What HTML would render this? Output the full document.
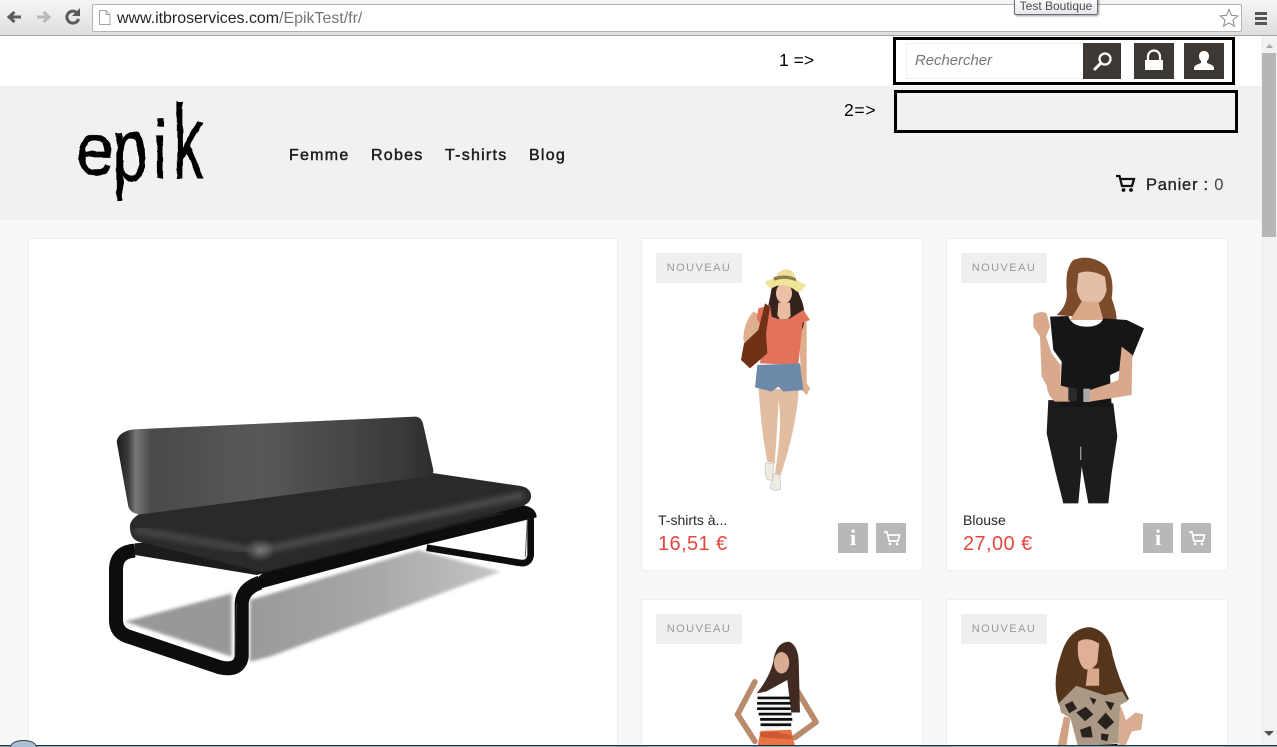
<!DOCTYPE html>
<html lang="fr">
<head>
<meta charset="utf-8">
<title>Test Boutique</title>
<style>
html,body{margin:0;padding:0;width:1277px;height:747px;overflow:hidden;background:#f8f8f8;font-family:"Liberation Sans",sans-serif}
#wrap{position:relative;width:1277px;height:747px;overflow:hidden;background:#f8f8f8}
.a{position:absolute}
.t{position:absolute;white-space:nowrap}
svg{position:absolute}
.card{position:absolute;background:#fff;box-shadow:0 0 2px rgba(0,0,0,.12);}
.badge{position:absolute;width:86px;height:30px;background:#efefef;color:#9a9a9a;font-size:11px;letter-spacing:1.45px;line-height:30px;text-align:center}
.btn{position:absolute;width:30px;height:30px;background:#b8b8b8;top:523px}
.name{position:absolute;top:512px;font-size:14px;color:#26262c;line-height:16px;white-space:nowrap}
.price{position:absolute;top:532px;font-size:20px;color:#e4473d;line-height:24px;letter-spacing:.4px;white-space:nowrap}
.nav{position:absolute;top:147px;font-size:16px;line-height:18px;color:#1d1d1d;letter-spacing:1.25px;-webkit-text-stroke:.45px #1d1d1d;white-space:nowrap}
.dk{position:absolute;background:#3d3833;top:43px;height:36px}
</style>
</head>
<body>
<div id="wrap">

<!-- browser toolbar -->
<div class="a" style="left:0;top:0;width:1277px;height:35px;background:linear-gradient(#f6f6f6,#dedede);border-bottom:1px solid #a3a3a3"></div>
<svg style="left:0;top:0" width="90" height="36">
  <path d="M21 17H10M14.500 12L9 17l5.500 5" fill="none" stroke="#5c5c5c" stroke-width="3"/>
  <path d="M37 17H48M43.500 12L49 17l-5.500 5" fill="none" stroke="#b9b9b9" stroke-width="3"/>
  <path d="M78 14a6 6 0 1 0 .6 5" fill="none" stroke="#5c5c5c" stroke-width="3"/>
  <path d="M80 8v8h-8z" fill="#5c5c5c"/>
</svg>
<div class="a" style="left:92px;top:4px;width:1148px;height:26px;background:#fff;border:1px solid #b4b4b4;border-radius:2px"></div>
<svg style="left:98px;top:9px" width="14" height="17">
  <path d="M1.500 1.500h6.500l4 4v10h-10.500zM8 1.500v4h4" fill="#fff" stroke="#a5a5a5"/>
</svg>
<div class="t" style="left:117px;top:9px;font-size:15.95px;line-height:19px;color:#242424">www.itbroservices.com<span style="color:#767676">/EpikTest/fr/</span></div>
<div class="t" style="left:1014px;top:-3px;width:82px;height:16px;background:linear-gradient(#fff,#e5e5ee);border:1px solid #6e6e6e;border-radius:2px;box-shadow:1px 1px 2px rgba(0,0,0,.4);font-size:12px;line-height:16px;text-align:center;color:#4c4c4c">Test Boutique</div>
<svg style="left:1219px;top:8px" width="20" height="20">
  <path d="M10 1.500l2.500 5.800 6.200.6-4.700 4.100 1.400 6.100L10 15l-5.400 3.100 1.400-6.100L1.300 7.900l6.200-.6z" fill="#fff" stroke="#8a8a8a"/>
</svg>
<div class="a" style="left:1255px;top:12px;width:12px;height:3px;background:#555;box-shadow:0 5px 0 #555,0 10px 0 #555"></div>

<!-- page backgrounds -->
<div class="a" style="left:0;top:36px;width:1261px;height:50px;background:#fff"></div>
<div class="a" style="left:0;top:86px;width:1261px;height:134px;background:#f1f1f0"></div>
<div class="a" style="left:0;top:220px;width:1261px;height:527px;background:#f8f8f8"></div>

<!-- scrollbar -->
<div class="a" style="left:1261px;top:36px;width:16px;height:709px;background:#f2f2f2"></div>
<div class="a" style="left:1262px;top:53px;width:14px;height:184px;background:#b6b6b6"></div>
<svg style="left:1261px;top:36px" width="16" height="709">
  <path d="M5 12l3.500-4 3.500 4z" fill="#a8a8a8"/>
  <path d="M3 695h10l-5 5z" fill="#505050"/>
</svg>

<!-- annotations -->
<div class="t" style="left:779px;top:51px;font-size:17.5px;line-height:19px;color:#000">1 =&gt;</div>
<div class="t" style="left:844px;top:101px;font-size:17.5px;line-height:19px;letter-spacing:.7px;color:#000">2=&gt;</div>
<div class="a" style="left:893px;top:37px;width:336px;height:42px;border:3px solid #000"></div>
<div class="a" style="left:894px;top:90px;width:338px;height:37px;border:3px solid #000"></div>

<!-- search row -->
<div class="a" style="left:906px;top:43px;width:176px;height:34px;border:1px solid #efefef;background:#fff"></div>
<div class="t" style="left:915px;top:52px;font-size:14.9px;line-height:18px;font-style:italic;color:#777">Rechercher</div>
<div class="dk" style="left:1083px;width:38px"></div>
<div class="dk" style="left:1134px;width:40px"></div>
<div class="dk" style="left:1184px;width:40px"></div>
<svg style="left:1083px;top:43px" width="150" height="36">
  <circle cx="22" cy="16" r="5.500" fill="none" stroke="#fff" stroke-width="2.300"/>
  <path d="M18 20l-6 6" stroke="#fff" stroke-width="3" stroke-linecap="round"/>
  <path d="M65 18v-4.500a6 6 0 0 1 12 0V18" fill="none" stroke="#fff" stroke-width="2.200"/>
  <rect x="62" y="17" width="18" height="10" fill="#fff"/>
  <path d="M111 27v-2c0-3 5-4 7-5v-2c-1.500-1.500-2-3-2-5 0-3 2-5 5-5s5 2 5 5c0 2-.5 3.500-2 5v2c2 1 7 2 7 5v2z" fill="#fff"/>
</svg>

<!-- logo: real text, roughened with a displacement filter -->
<svg style="left:60px;top:90px" width="170" height="120">
  <defs>
    <filter id="brush" x="-20%" y="-20%" width="140%" height="140%">
      <feTurbulence type="fractalNoise" baseFrequency="0.08" numOctaves="2" seed="4"/>
      <feDisplacementMap in="SourceGraphic" scale="4" xChannelSelector="R" yChannelSelector="G"/>
    </filter>
  </defs>
  <g filter="url(#brush)" fill="#000" font-family="Liberation Sans, sans-serif" stroke="#000" stroke-width=".7">
    <text transform="translate(16,85) scale(.98,1.05)" font-size="70">e</text>
    <text transform="translate(53,91) scale(.88,1.3)" font-size="70">p</text>
    <text transform="translate(93,88) scale(.9,1.15)" font-size="70">i</text>
    <text transform="translate(113,88) scale(.88,1.5)" font-size="70">k</text>
  </g>
</svg>

<!-- nav -->
<div class="nav" style="left:289px">Femme</div>
<div class="nav" style="left:371px">Robes</div>
<div class="nav" style="left:445px">T-shirts</div>
<div class="nav" style="left:529px">Blog</div>

<!-- cart -->
<svg style="left:1115px;top:174px" width="22" height="19">
  <path d="M1 2h3.500l2.500 10h10l2-7H6" fill="none" stroke="#111" stroke-width="2.300"/>
  <circle cx="8.500" cy="16" r="1.900" fill="#111"/><circle cx="16" cy="16" r="1.900" fill="#111"/>
</svg>
<div class="t" style="left:1146px;top:176px;font-size:16.5px;line-height:19px;color:#222;letter-spacing:.75px;-webkit-text-stroke:.3px #222">Panier : <span style="color:#444;-webkit-text-stroke:0">0</span></div>

<!-- large card -->
<div class="card" style="left:29px;top:239px;width:588px;height:520px"></div>
<svg style="left:90px;top:400px" width="470" height="290" viewBox="0 0 1410 870">
  <defs>
    <linearGradient id="sh" x1="0" y1="0" x2="1" y2="0">
      <stop offset="0" stop-color="#999"/><stop offset=".5" stop-color="#a8a8a8"/><stop offset="1" stop-color="#c4c4c4"/>
    </linearGradient>
    <linearGradient id="back" x1="0" y1="0" x2="1" y2="0">
      <stop offset="0" stop-color="#1d1d1d"/><stop offset=".035" stop-color="#3a3a3a"/><stop offset=".06" stop-color="#777"/><stop offset=".11" stop-color="#4a4a4a"/><stop offset=".45" stop-color="#585858"/><stop offset=".9" stop-color="#3a3a3a"/><stop offset="1" stop-color="#2c2c2c"/>
    </linearGradient>
    <radialGradient id="corner"><stop offset="0" stop-color="#7a7a7a"/><stop offset="1" stop-color="#7a7a7a" stop-opacity="0"/></radialGradient>
    <filter id="b1"><feGaussianBlur stdDeviation="5"/></filter>
    <filter id="b2"><feGaussianBlur stdDeviation="1"/></filter>
    <filter id="b3"><feGaussianBlur stdDeviation="7"/></filter>
  </defs>
  <path d="M105 665L425 580 425 770z" fill="#989898" filter="url(#b1)"/>
  <path d="M480 600L985 450 1230 515 540 770 480 785z" fill="url(#sh)" filter="url(#b1)"/>
  <g filter="url(#b2)">
    <!-- far leg -->
    <path d="M1322 350V465Q1318 495 1285 488L1010 443" fill="none" stroke="#111" stroke-width="20"/>
    <path d="M1312 360L1306 470" stroke="#666" stroke-width="3"/>
    <!-- front legs: one continuous tube -->
    <path d="M135 452Q78 455 78 510V660Q78 695 110 708L390 802Q448 815 455 770V610Q458 565 510 548" fill="none" stroke="#0b0b0b" stroke-width="42" stroke-linejoin="round"/>
    <!-- rail under the seat -->
    <path d="M470 580Q490 530 545 505L1290 315Q1338 318 1340 352L1000 435 510 566Q482 575 476 600z" fill="#0b0b0b"/>
    <path d="M135 430V465L500 525 1250 340 1150 330z" fill="#1c1c1c"/>
    <path d="M440 610L435 770" stroke="#333" stroke-width="3"/>
    <!-- seat -->
    <path d="M120 375Q125 350 170 330L1000 215 1285 257Q1325 262 1323 292 1320 312 1290 320L545 510Q510 520 470 505L145 425Q118 415 120 375z" fill="#2b2b2b"/>
    <path d="M520 450L1300 285" stroke="#484848" stroke-width="22" filter="url(#b3)"/>
    <path d="M135 390L480 450" stroke="#444" stroke-width="22" filter="url(#b3)"/>
    <ellipse cx="510" cy="450" rx="45" ry="34" fill="url(#corner)"/>
    <!-- backrest -->
    <path d="M80 125Q85 95 130 88L975 50Q995 50 1000 75L1030 210Q1032 225 1010 230L160 342Q125 346 115 320z" fill="url(#back)"/>
  </g>
</svg>

<!-- product cards -->
<div class="card" style="left:642px;top:239px;width:280px;height:331px"></div>
<div class="card" style="left:947px;top:239px;width:280px;height:331px"></div>
<div class="card" style="left:642px;top:600px;width:280px;height:160px"></div>
<div class="card" style="left:947px;top:600px;width:280px;height:160px"></div>

<!-- figure 1 -->
<svg style="left:640px;top:240px" width="300" height="340" viewBox="0 0 900 1020">
  <g filter="url(#b2)">
    <path d="M356 445Q362 560 382 665L404 670Q412 560 416 480 428 560 404 705L422 705Q470 560 476 450z" fill="#e3bda0"/>
    <path d="M377 668Q372 705 382 718L396 722 402 672zM390 745Q405 755 422 748L420 705 402 700z" fill="#ecece4" stroke="#c4c4bc" stroke-width="2"/>
    <path d="M340 215Q310 250 310 300L335 340 350 300 370 230z" fill="#dfae8d"/>
    <path d="M480 240L500 245 500 430 510 445 500 465 485 450 478 300z" fill="#dfae8d"/>
    <path d="M395 145Q385 200 375 240L400 240 470 310 490 260Q500 210 480 170L465 130 405 130z" fill="#35211a"/>
    <ellipse cx="432" cy="160" rx="24" ry="30" fill="#ecc1a8"/>
    <path d="M415 188h35l2 40-10 10h-22l-8-12z" fill="#e9bb9f"/>
    <path d="M355 205L390 195 395 230Q430 245 450 235L490 210 510 240 488 248 475 375 360 370 372 275 350 235z" fill="#e2735a"/>
    <path d="M375 190L390 200 378 280 382 340 330 385 303 360 312 310 355 270z" fill="#6f3119"/>
    <path d="M352 375L480 370 490 450 430 455 415 440 395 455 345 442z" fill="#6d89a9"/>
    <path d="M375 125Q440 95 497 135 490 155 470 155 435 122 395 145 378 140 375 125z" fill="#f1e59a"/>
    <path d="M405 120Q410 90 440 88 465 88 468 125 435 112 405 120z" fill="#eddf9e"/>
    <path d="M400 112Q435 100 468 115L468 124Q435 110 403 122z" fill="#8d7f4a"/>
  </g>
</svg>

<!-- figure 2 -->
<svg style="left:940px;top:240px" width="300" height="340" viewBox="0 0 900 1020">
  <g filter="url(#b2)">
    <path d="M400 60Q450 40 495 75 525 110 515 175 530 215 530 240L350 225Q385 195 380 150 375 85 400 60z" fill="#7b4c2c"/>
    <path d="M415 100Q450 85 495 110L500 150Q490 195 450 195 420 195 410 150z" fill="#e3bea8"/>
    <path d="M425 185L475 185 490 240H390z" fill="#d9a98a"/>
    <path d="M325 480L520 490 532 590 515 700 505 790H445L425 680 415 790H370L345 690 320 580z" fill="#1a1a1a"/>
    <path d="M330 230L385 228Q395 260 440 260 480 260 490 235L560 240 612 265 565 380 510 405 515 500H360L365 365 340 330z" fill="#171717"/>
    <path d="M280 225Q300 210 320 220L330 260 318 290 335 340 362 375 362 440 322 440 305 410 300 290 280 260z" fill="#d8a98c"/>
    <path d="M320 440Q345 428 390 445V485H345Q325 470 320 440z" fill="#d8a98c"/>
    <path d="M545 320L577 345 575 465 450 485 450 450 510 430 535 420z" fill="#d8a98c"/>
    <path d="M385 440l25 5v40l-25-3z" fill="#2a2a2a"/>
    <path d="M430 446h20v40h-20z" fill="#a9a9a9"/>
    <path d="M422 620v40" stroke="#999" stroke-width="4"/>
  </g>
</svg>

<!-- figures 3 and 4 -->
<svg style="left:640px;top:590px" width="600" height="157" viewBox="0 0 1568 410">
  <g filter="url(#b2)">
    <path d="M300 240L255 325 300 395M412 265L460 345 405 385" fill="none" stroke="#b98a6c" stroke-width="15" stroke-linecap="round" stroke-linejoin="round"/>
    <path d="M355 160Q365 135 390 135 415 145 415 195L418 320H395L385 235 330 265 305 270Q345 220 350 175z" fill="#3f2a20"/>
    <ellipse cx="370" cy="190" rx="20" ry="28" fill="#d9ab90"/>
    <path d="M310 275L330 285 370 285 388 265 398 350 330 370 310 330z" fill="#f2f2f2"/>
    <path d="M307 282h85M306 296h88M306 310h88M310 324h86M314 338h84M315 352h80" stroke="#111" stroke-width="7"/>
    <path d="M315 368L395 365 420 470H295z" fill="#ea7344"/>
    <path d="M312 372l45-2 45 12-10 8-75-5z" fill="#cb5a33"/>
  </g>
  <g filter="url(#b2)">
    <path d="M1100 170Q1120 100 1175 97 1225 105 1235 170 1250 230 1278 285L1240 305 1170 265 1095 300Q1075 240 1100 170z" fill="#54361f"/>
    <path d="M1145 135Q1170 120 1200 140L1195 190Q1180 215 1160 205 1140 185 1145 135z" fill="#dfb095"/>
    <path d="M1170 205h30v45h-35z" fill="#d9a98c"/>
    <path d="M1108 330L1125 335 1105 470H1078z" fill="#cfa082"/>
    <path d="M1255 300L1270 340 1295 320 1315 325 1310 365 1285 370 1260 425 1250 410z" fill="#d8ad92"/>
    <path d="M1095 295L1140 250 1215 275 1260 265 1275 290 1255 300 1250 400 1145 410 1125 335 1100 320z" fill="#ab9986"/>
    <path d="M1110 300l20-10 12 20-20 12zM1140 320l25-15 20 20-22 18zM1195 345l22-25 22 25-22 20zM1150 365l28-10 5 30h-28zM1215 290l25 5-10 20zM1175 280l18 6-8 14zM1205 375l20 2-4 18-16-4z" fill="#2c241e"/>
    <path d="M1145 408L1248 402 1248 425 1150 428z" fill="#111"/>
    <path d="M1145 428L1248 425 1250 470H1130z" fill="#8a7868"/>
  </g>
</svg>

<!-- badges -->
<div class="badge" style="left:656px;top:253px">NOUVEAU</div>
<div class="badge" style="left:961px;top:253px">NOUVEAU</div>
<div class="badge" style="left:656px;top:614px">NOUVEAU</div>
<div class="badge" style="left:961px;top:614px">NOUVEAU</div>

<!-- labels -->
<div class="name" style="left:658px">T-shirts à...</div>
<div class="price" style="left:658px">16,51 €</div>
<div class="name" style="left:963px">Blouse</div>
<div class="price" style="left:963px">27,00 €</div>

<!-- buttons -->
<div class="btn" style="left:838px"></div>
<div class="btn" style="left:876px"></div>
<div class="btn" style="left:1143px"></div>
<div class="btn" style="left:1181px"></div>
<div class="t" style="left:838px;top:525px;width:30px;text-align:center;font-family:'Liberation Serif',serif;font-weight:bold;font-size:22px;line-height:26px;color:#fff">i</div>
<div class="t" style="left:1143px;top:525px;width:30px;text-align:center;font-family:'Liberation Serif',serif;font-weight:bold;font-size:22px;line-height:26px;color:#fff">i</div>
<svg style="left:876px;top:523px" width="30" height="30">
  <path d="M8 9h3l2 9h9l1.500-6H12" fill="none" stroke="#fff" stroke-width="1.700"/>
  <circle cx="14" cy="21" r="1.400" fill="#fff"/><circle cx="21" cy="21" r="1.400" fill="#fff"/>
</svg>
<svg style="left:1181px;top:523px" width="30" height="30">
  <path d="M8 9h3l2 9h9l1.500-6H12" fill="none" stroke="#fff" stroke-width="1.700"/>
  <circle cx="14" cy="21" r="1.400" fill="#fff"/><circle cx="21" cy="21" r="1.400" fill="#fff"/>
</svg>

<!-- taskbar sliver -->
<div class="a" style="left:0;top:745px;width:1277px;height:1px;background:#26323a"></div>
<div class="a" style="left:0;top:746px;width:1277px;height:1px;background:#8fa8b8"></div>
<div class="a" style="left:10px;top:740px;width:27px;height:14px;border-radius:50%;background:#a9c0d2;border:1px solid #33434e;box-sizing:border-box"></div>

</div>
</body>
</html>
